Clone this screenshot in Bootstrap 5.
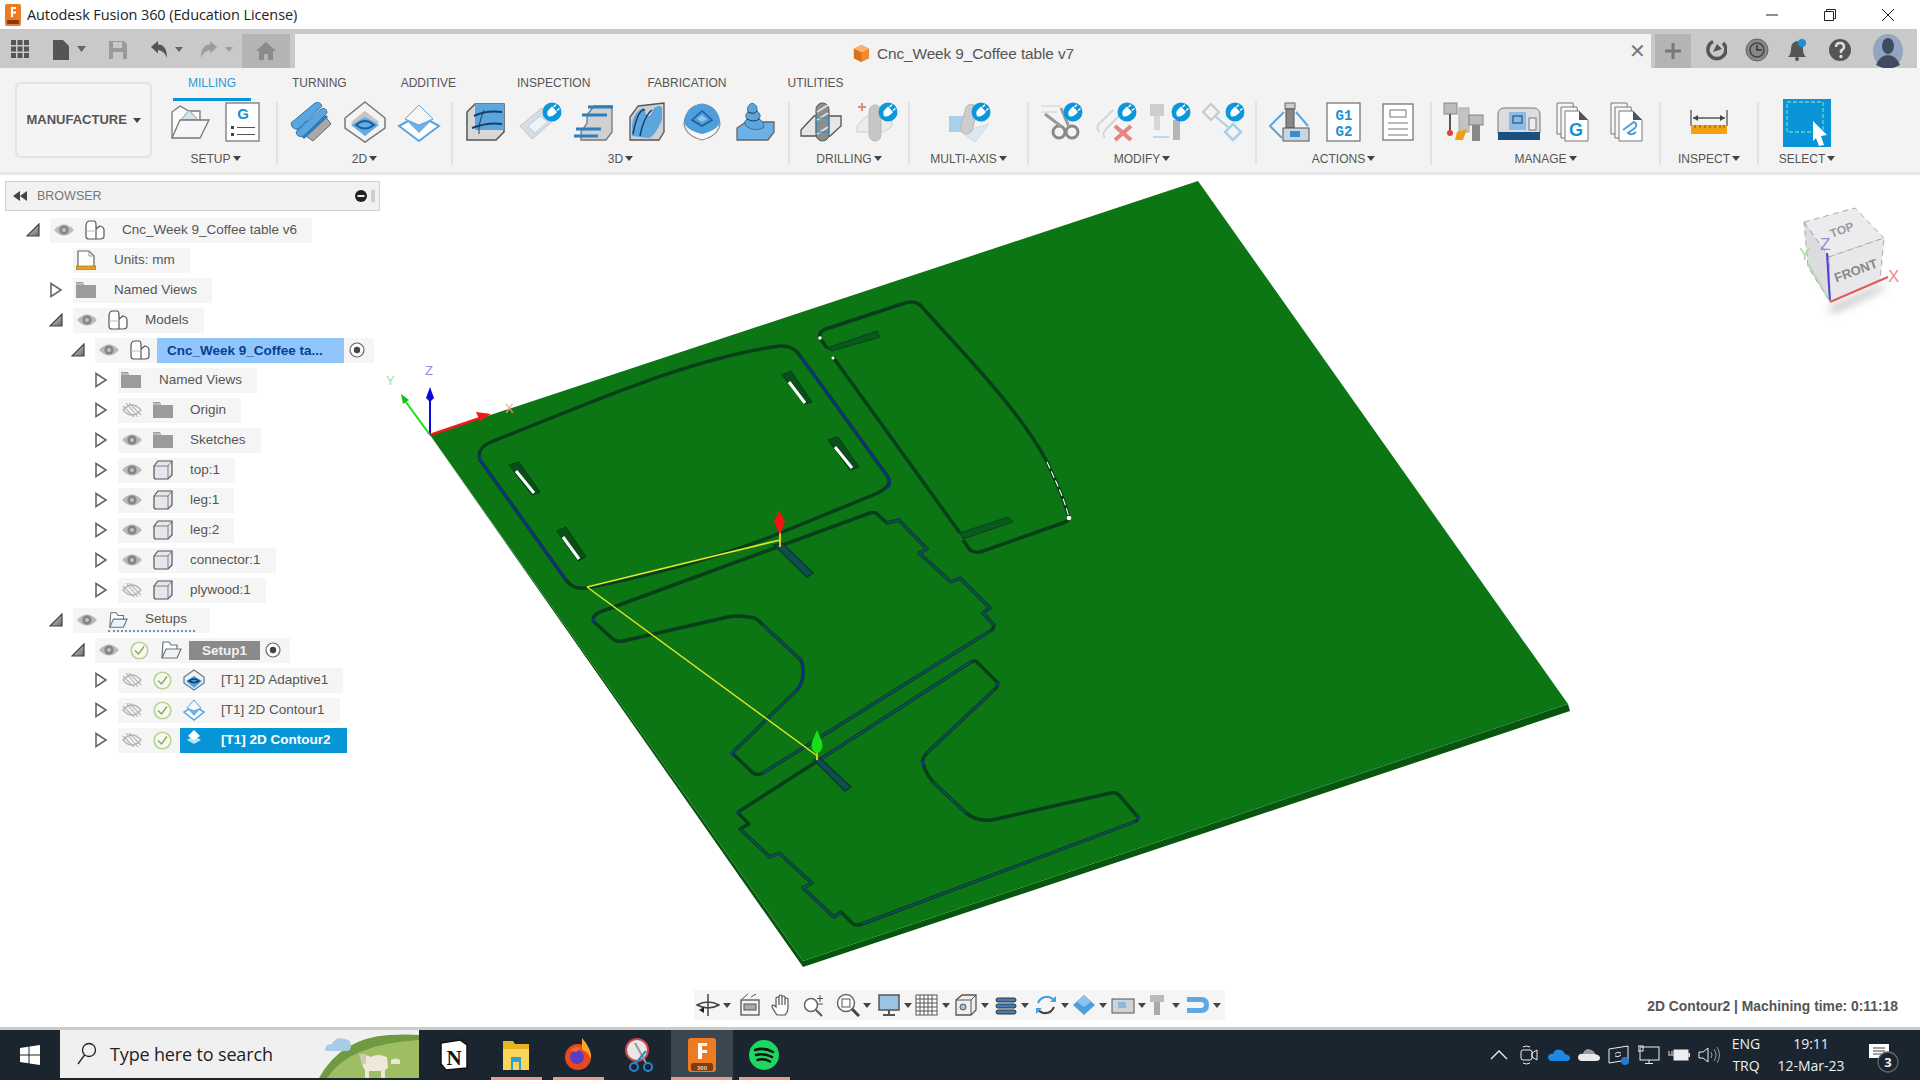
<!DOCTYPE html>
<html lang="en">
<head>
<meta charset="UTF-8">
<title>Autodesk Fusion 360 (Education License)</title>
<link href="https://cdn.jsdelivr.net/npm/bootstrap@5.3.2/dist/css/bootstrap.min.css" rel="stylesheet">
<style>
    html, body { height: 100%; overflow: hidden; background: #fff; font-family: "Liberation Sans", Arial, sans-serif; }
    .app-shell { height: 1080px; width: 1920px; }

    /* title bar */
    .title-bar { height: 29px; background: #fff; padding-left: 4px; }
    .title-text { font: 14.5px "Open Sans", sans-serif; color: #222; margin-left: 5px; letter-spacing: -.1px; }
    .win-btns { margin-left: auto; margin-right: 3px; }
    .win-btn { width: 58px; display: flex; justify-content: center; }

    /* tab bar */
    .tab-bar { height: 39px; background: #c9c9c9; padding-top: 5px; }
    .qat { width: 295px; height: 34px; position: relative; }
    .qat-slot { position: absolute; top: 6px; }
    .qs-grid { left: 11px; } .qs-file { left: 53px; } .qs-save { left: 108px; } .qs-undo { left: 150px; } .qs-redo { left: 200px; }
    .qat-home { position: absolute; left: 242px; top: 0; width: 48px; height: 34px; background: #b4b4b4; display: flex; align-items: center; justify-content: center; }
    .doc-tab { width: 1356px; height: 39px; margin-top: -5px; padding-top: 5px; padding-right: 20px; background: #f3f3f3; border-top: 5px solid #c9c9c9; position: relative; justify-content: center; }
    .doc-name { font-size: 15.4px; color: #555; margin-left: 6px; letter-spacing: -.1px; }
    .doc-close { position: absolute; right: 5px; top: 5px; font-size: 20px; color: #777; line-height: 24px; }
    .plus-btn { width: 36px; height: 34px; background: #b4b4b4; margin-left: 4px; }
    .tab-right { width: 226px; height: 34px; background: #c9c9c9; position: relative; }
    .tab-ico { position: absolute; top: 4px; }
    .ti-help1 { left: 14px; } .ti-clock { left: 54px; } .ti-bell { left: 95px; } .ti-help { left: 137px; } .ti-avatar { left: 182px; top: 0; }
    .edge-gap { background: #fff; width: 3px; height: 39px; margin-top: -5px; }

    /* ribbon */
    .ribbon { height: 107px; background: #f3f3f3; border-bottom: 3px solid #e6e6e6; padding-left: 15px; }
    .mfg-btn { width: 137px; height: 76px; margin-top: 14px; border: 2px solid #e2e2e2; border-radius: 6px; font-size: 13px; font-weight: 700; color: #555; background: #f4f4f4; white-space: nowrap; }
    .caret-mark { display: inline-block; width: 0; height: 0; border-left: 4px solid transparent; border-right: 4px solid transparent; border-top: 5px solid #444; vertical-align: 2px; margin-left: 2px; }
    .ribbon-main { margin-left: 11px; }
    .ribbon-tabs { height: 33px; padding-left: 10px; }
    .ribbon-tab { font-size: 12px; line-height: 30px; padding: 0 15px; color: #555; border-bottom: 3px solid transparent; }
    .ribbon-tab.on { color: #2a9ad8; border-bottom-color: #0696d7; }
    .ribbon-tab:nth-child(2) { margin-left: 26px; }
    .ribbon-tab:nth-child(3) { margin-left: 24px; }
    .ribbon-tab:nth-child(4) { margin-left: 31px; }
    .ribbon-tab:nth-child(5) { margin-left: 27px; }
    .ribbon-tab:nth-child(6) { margin-left: 31px; }
    .ribbon-grp { height: 63px; margin-top: 1px; border-right: 2px solid #e2e2e2; }
    .ribbon-icons { gap: 10px; height: 40px; }
    .rico { width: 44px; height: 40px; overflow: visible; }
    .ribbon-lbl { font-size: 12px; line-height: 16px; margin-top: 9px; color: #555; white-space: nowrap; position: relative; }
    .g-setup { width: 115px; padding-right: 8px; } .g-2d { width: 175px; } .g-3d { width: 337px; } .g-drill { width: 120px; }
    .g-multi { width: 119px; } .g-modify { width: 228px; } .g-actions { width: 175px; } .g-manage { width: 229px; }
    .g-inspect { width: 98px; } .g-select { width: 96px; border-right: 0; }

    /* viewport */
    .view-area { height: 852px; }
    .scene { position: absolute; left: 0; top: 0; width: 1920px; height: 852px; }

    /* browser */
    .browser-panel { position: relative; width: 380px; margin-left: 5px; padding-top: 6px; }
    .browser-head { height: 30px; width: 375px; background: #f1f1f1; border: 1px solid #cfcfcf; font-size: 12.5px; color: #777; padding-left: 7px; }
    .browser-head .bh-title { margin-left: 10px; }
    .tree-list { margin-left: -5px; margin-top: 4px; }
    .tree-row { height: 30px; white-space: nowrap; }
    .lv0 { padding-left: 26px; } .lv1 { padding-left: 49px; } .lv2 { padding-left: 71px; } .lv3 { padding-left: 94px; }
    .tw-slot { width: 24px; display: flex; align-items: center; flex: none; }
    .tree-pill { height: 25px; background: #f5f5f5; padding-left: 4px; padding-right: 15px; font-size: 13.5px; color: #555; }
    .tree-pill.p-tight { padding-right: 0; }
    .tree-pill.no-eye { padding-left: 3px; }
    .ti-eye { width: 20px; height: 14px; margin-right: 11px; flex: none; }
    .ti-check { width: 19px; height: 19px; margin-right: 11px; flex: none; }
    .ti-main { width: 20px; height: 20px; margin-right: 17px; flex: none; }
    .ti-op { width: 22px; height: 22px; margin-right: 16px; flex: none; }
    .ti-wide { margin-right: 7px; }
    .no-eye .ti-main { margin-right: 18px; }
    .active-doc { width: 187px; height: 25px; background: #90c6fb; color: #0b3d91; font-weight: 700; margin-left: -10px; padding-left: 10px; line-height: 25px; }
    .radio-mark { width: 16px; height: 16px; margin: 0 9px 0 5px; flex: none; }
    .setup-tag { width: 71px; height: 19px; background: #8a8a8a; color: #f2f2f2; font-weight: 700; text-align: center; line-height: 19px; }
    .dash-line { border-bottom: 2px dotted #6f93b8; height: 24px; padding-top: 1px; }
    .sel-op { width: 167px; height: 25px; background: #0696d7; color: #fff; font-weight: 700; margin-left: -3px; padding-left: 7px; }
    .sel-op svg { width: 14px; height: 14px; margin-right: 20px; margin-top: -6px; }

    /* bottom toolbar */
    .view-tools { position: absolute; left: 694px; top: 815px; height: 30px; width: 531px; background: #f5f5f5; padding-left: 2px; }
    .vt-item { display: flex; align-items: center; justify-content: flex-start; flex: none; }
    .vt-item svg { width: 24px; height: 24px; flex: none; }
    .vt-item .caret-mark { margin-left: 3px; border-top-color: #444; vertical-align: 0; }
    .vw-31 { width: 31px; } .vw-32 { width: 32px; } .vw-34 { width: 34px; } .vw-35 { width: 35px; } .vw-38 { width: 38px; }
    .vw-39 { width: 39px; } .vw-40 { width: 40px; } .vw-41 { width: 41px; } .vw-42 { width: 42px; }
    .status-text { position: absolute; right: 22px; top: 821px; font-size: 13.85px; font-weight: 700; color: #555; white-space: nowrap; }

    /* taskbar */
    .task-bar { height: 53px; background: #1b2530; border-top: 3px solid #cbcbc7; color: #eef0f2; font-family: "Open Sans", sans-serif; }
    .start-btn { width: 60px; }
    .search-box { width: 359px; height: 48px; background: #f0f0f0; position: relative; padding-left: 17px; color: #222; font-size: 18px; overflow: hidden; align-self: flex-start; }
    .search-box span { margin-left: 13px; letter-spacing: -.15px; position: relative; }
    .search-art { position: absolute; right: 0; top: 0; width: 100px; height: 48px; }
    .task-apps { padding-left: 4px; }
    .task-app { width: 62px; height: 50px; position: relative; display: flex; align-items: center; justify-content: center; }
    .task-app svg { width: 32px; height: 36px; }
    .task-app.open::after { content: ""; position: absolute; left: 6px; right: 5px; bottom: 0; height: 3px; background: #e89c88; }
    .task-app.front { background: #3b4651; }
    .task-app.front::after { left: 0; right: 1px; }
    .tray { margin-left: auto; padding-right: 16px; }
    .tray-ico { width: 30px; display: flex; justify-content: center; }
    .tray-ico svg { width: 22px; height: 20px; }
    .lang-box { width: 44px; text-align: center; font-size: 14px; line-height: 22px; }
    .clock-box { width: 86px; text-align: center; font-size: 14px; line-height: 22px; white-space: nowrap; }
    .notify-box { width: 50px; height: 50px; position: relative; }
    .notify-box svg { position: absolute; left: 15px; top: 12px; width: 34px; height: 34px; }
</style>
</head>
<body>

<!-- shared icons -->
<svg width="0" height="0" class="position-absolute">
  <defs>
    <symbol id="eye" viewBox="0 0 20 14"><path d="M0 7Q10-4 20 7Q10 18 0 7Z" fill="#b9b9b9"/><circle cx="10" cy="7" r="4.600" fill="#858585"/><circle cx="10" cy="7" r="2" fill="#c2c2c2"/></symbol>
    <symbol id="eye-off" viewBox="0 0 20 14"><path d="M1 7Q10-3 19 7Q10 17 1 7Z" fill="none" stroke="#b4b4b4" stroke-width="1.300"/><path d="M4 0L16 14M7 0L19 12M1 3L12 14" stroke="#b4b4b4" stroke-width="1.100"/></symbol>
    <symbol id="comp" viewBox="0 0 20 20"><path d="M1 6Q1 1 5 1H9Q11 1 11 5V19H4Q1 19 1 16ZM11 9L15 6Q19 7 19 10V16Q19 19 15 19H11" fill="#fff" stroke="#555" stroke-width="1.200"/><path d="M1 11H11" stroke="#bbb"/></symbol>
    <symbol id="folder" viewBox="0 0 20 20"><path d="M0 2H7L8 5H20V18H0Z" fill="#9b9b9b"/><path d="M0 4H7" stroke="#ddd"/></symbol>
    <symbol id="body" viewBox="0 0 20 20"><path d="M1 6L5 1H19V15L15 19H3Q1 19 1 17Z" fill="#e6e7ee" stroke="#555" stroke-width="1.200"/><path d="M1 6H15V19M15 6L19 1" fill="none" stroke="#666" stroke-width=".8"/></symbol>
    <symbol id="units" viewBox="0 0 20 20"><path d="M2 16V1H13L18 6V16" fill="#fff" stroke="#666" stroke-width="1.200"/><path d="M13 1V6H18" fill="none" stroke="#999"/><rect x="0" y="16" width="20" height="4" fill="#e9a11d" stroke="#8a6a18" stroke-width=".6"/></symbol>
    <symbol id="setup-ico" viewBox="0 0 22 22"><path d="M2 19L3 3H9L11 6H17V10" fill="#fff" stroke="#6a7480" stroke-width="1.200"/><path d="M2 19L6 10H21L17 19Z" fill="#eef3f7" stroke="#6a7480" stroke-width="1.200"/></symbol>
    <symbol id="check" viewBox="0 0 19 19"><circle cx="9.500" cy="9.500" r="8.300" fill="#f7faf0" stroke="#b6d48f" stroke-width="1.600"/><path d="M5 9.500L8.500 13L14 5.500" fill="none" stroke="#7fa85a" stroke-width="1.300"/></symbol>
    <symbol id="radio" viewBox="0 0 16 16"><circle cx="8" cy="8" r="7" fill="#fff" stroke="#666" stroke-width="1.200"/><circle cx="8" cy="8" r="3.200" fill="#444"/></symbol>
    <symbol id="tri-down" viewBox="0 0 14 14"><defs><linearGradient id="trifill" x1="0" y1="0" x2="1" y2="1"><stop offset="0" stop-color="#e4e4e4"/><stop offset="1" stop-color="#666"/></linearGradient></defs><path d="M1 13L13 1V13Z" fill="url(#trifill)" stroke="#444" stroke-width="1.200"/></symbol>
    <symbol id="tri-right" viewBox="0 0 14 16"><path d="M2 1.500L12 8L2 14.500Z" fill="#fff" stroke="#666" stroke-width="1.600"/></symbol>
    <symbol id="plug" viewBox="0 0 20 20"><circle cx="10" cy="10" r="9.500" fill="#0c97dc"/><path d="M6 14Q4 10 7.500 7L10 4.500L15 10L12.500 12.500Q9 15.500 6 14Z" fill="#fff"/><path d="M11.500 5L14 2.800M15 8.500L17.500 6.500" stroke="#fff" stroke-width="1.500"/></symbol>
  </defs>
</svg>

<div class="app-shell d-flex flex-column">

  <!-- title bar -->
  <div class="title-bar d-flex align-items-center">
    <svg width="18" height="24" viewBox="0 0 18 24"><rect x="1" y="1" width="16" height="22" rx="2" fill="#ee7b22"/><path d="M7 4H12V6H9V8.500H12V10.500H9V14H7Z" fill="#fff"/><rect x="3" y="17" width="12" height="4" rx="1" fill="#7d3d10"/></svg>
    <span class="title-text">Autodesk Fusion 360 (Education License)</span>
    <div class="win-btns d-flex align-items-center">
      <span class="win-btn"><svg width="14" height="14" viewBox="0 0 14 14"><path d="M1 7H13" stroke="#222"/></svg></span>
      <span class="win-btn"><svg width="14" height="14" viewBox="0 0 14 14"><path d="M1.500 3.500H10.500V12.500H1.500ZM3.500 3.500V1.500H12.500V10.500H10.500" fill="none" stroke="#222"/></svg></span>
      <span class="win-btn"><svg width="14" height="14" viewBox="0 0 14 14"><path d="M1 1L13 13M13 1L1 13" stroke="#222"/></svg></span>
    </div>
  </div>

  <!-- application tab bar -->
  <div class="tab-bar d-flex">
    <div class="qat">
      <svg class="qat-slot qs-grid" width="18" height="18" viewBox="0 0 18 18" fill="#555"><rect width="5" height="5"/><rect x="6.500" width="5" height="5"/><rect x="13" width="5" height="5"/><rect y="6.500" width="5" height="5"/><rect x="6.500" y="6.500" width="5" height="5"/><rect x="13" y="6.500" width="5" height="5"/><rect y="13" width="5" height="5"/><rect x="6.500" y="13" width="5" height="5"/><rect x="13" y="13" width="5" height="5"/></svg>
      <svg class="qat-slot qs-file" width="34" height="20" viewBox="0 0 34 20"><path d="M0 0H10L16 6V20H0Z" fill="#555"/><path d="M24 6H33L28.500 12Z" fill="#666"/></svg>
      <svg class="qat-slot qs-save" width="20" height="20" viewBox="0 0 20 20"><path d="M1 1H16L19 4V19H1Z" fill="#9a9a9a"/><rect x="5" y="2" width="9" height="6" fill="#c9c9c9"/><rect x="5" y="12" width="10" height="7" fill="#c9c9c9"/></svg>
      <svg class="qat-slot qs-undo" width="36" height="20" viewBox="0 0 36 20"><path d="M1 7L8 1V4.500Q17 4.500 17 18Q14 10.500 8 10V13.500Z" fill="#555"/><path d="M25 7H33L29 12Z" fill="#666"/></svg>
      <svg class="qat-slot qs-redo" width="36" height="20" viewBox="0 0 36 20"><path d="M17 7L10 1V4.500Q1 4.500 1 18Q4 10.500 10 10V13.500Z" fill="#9c9c9c"/><path d="M25 7H33L29 12Z" fill="#9c9c9c"/></svg>
      <div class="qat-home"><svg width="20" height="18" viewBox="0 0 20 18"><path d="M10 0L20 9H17V18H12V12H8V18H3V9H0Z" fill="#8a8a8a"/></svg></div>
    </div>
    <div class="doc-tab d-flex align-items-center">
      <svg width="19" height="19" viewBox="0 0 20 20"><path d="M10 1L18 5V15L10 19L2 15V5Z" fill="#ee8a2c"/><path d="M2 5L10 9L18 5L10 1Z" fill="#f8b26a"/><path d="M10 9V19L2 15V5Z" fill="#d9701c"/></svg>
      <span class="doc-name">Cnc_Week 9_Coffee table v7</span>
      <span class="doc-close">&#10005;</span>
    </div>
    <div class="plus-btn d-flex align-items-center justify-content-center"><svg width="20" height="20" viewBox="0 0 20 20"><path d="M10 2V18M2 10H18" stroke="#777" stroke-width="3"/></svg></div>
    <div class="tab-right">
      <svg class="tab-ico ti-help1" width="22" height="24" viewBox="0 0 22 24"><path d="M8 3.500A9 9 0 1 0 18 5" fill="none" stroke="#555" stroke-width="3.500"/><path d="M8 14L12 6L17 11Z" fill="#555"/></svg>
      <svg class="tab-ico ti-clock" width="24" height="24" viewBox="0 0 24 24"><circle cx="12" cy="12" r="11" fill="#888" stroke="#666"/><circle cx="12" cy="12" r="7" fill="none" stroke="#444" stroke-width="1.500"/><path d="M12 7V12H17" fill="none" stroke="#333" stroke-width="1.500"/></svg>
      <svg class="tab-ico ti-bell" width="24" height="24" viewBox="0 0 24 24"><path d="M2 19Q5 16 5 11Q5 4 11 3Q17 4 17 11Q17 16 20 19Z" fill="#555"/><circle cx="11" cy="21" r="2" fill="#555"/><circle cx="16" cy="5" r="4" fill="#1a8fd8"/></svg>
      <svg class="tab-ico ti-help" width="24" height="24" viewBox="0 0 24 24"><circle cx="12" cy="12" r="11" fill="#555"/><path d="M8 9Q8 5 12 5Q16 5 16 9Q16 11 13 12.500V15" fill="none" stroke="#ddd" stroke-width="2.500"/><circle cx="13" cy="18.500" r="1.700" fill="#ddd"/></svg>
      <svg class="tab-ico ti-avatar" width="30" height="34" viewBox="0 0 30 34"><ellipse cx="15" cy="17" rx="15" ry="17" fill="#93a6c0"/><ellipse cx="15" cy="12" rx="6" ry="8" fill="#3f4b5f"/><path d="M3 31Q7 21 15 21Q23 21 27 31Q15 38 3 31Z" fill="#3f4b5f"/></svg>
    </div>
    <div class="edge-gap"></div>
  </div>

  <!-- ribbon -->
  <div class="ribbon d-flex">
    <div class="mfg-btn d-flex align-items-center justify-content-center">MANUFACTURE&nbsp;<span class="caret-mark"></span></div>
    <div class="ribbon-main d-flex flex-column">
      <div class="ribbon-tabs d-flex">
        <span class="ribbon-tab on">MILLING</span>
        <span class="ribbon-tab">TURNING</span>
        <span class="ribbon-tab">ADDITIVE</span>
        <span class="ribbon-tab">INSPECTION</span>
        <span class="ribbon-tab">FABRICATION</span>
        <span class="ribbon-tab">UTILITIES</span>
      </div>
      <div class="d-flex">

        <div class="ribbon-grp g-setup d-flex flex-column align-items-center">
          <div class="ribbon-icons d-flex">
            <svg class="rico" viewBox="0 0 44 40"><path d="M5 36V10L13 4L22 9H33V18" fill="#fafafa" stroke="#777" stroke-width="1.300"/><path d="M14 18L22 8L31 18Z" fill="#d5e3ea" stroke="#999"/><path d="M5 36H33L42 18H13Z" fill="#f6f6f6" fill-opacity=".85" stroke="#777" stroke-width="1.300"/></svg>
            <svg class="rico" viewBox="0 0 44 40"><rect x="5" y="1" width="33" height="38" fill="#fff" stroke="#777" stroke-width="1.300"/><text x="22" y="17" text-anchor="middle" font-size="15" font-weight="700" fill="#1b8fd0" font-family="Liberation Sans">G</text><rect x="10" y="24" width="3" height="3" fill="#444"/><rect x="10" y="31" width="3" height="3" fill="#444"/><path d="M16 25.500H34M16 32.500H34" stroke="#555"/></svg>
          </div>
          <div class="ribbon-lbl">SETUP<span class="caret-mark"></span></div>
        </div>

        <div class="ribbon-grp g-2d d-flex flex-column align-items-center">
          <div class="ribbon-icons d-flex">
            <svg class="rico" viewBox="0 0 44 40"><path d="M3 24L24 39L42 22L36 14Z" fill="#a9a9a9" stroke="#666"/><path d="M2 21L26 1Q31-1 33 4L9 27Q3 28 2 21Z" fill="#5aa5de" stroke="#2f79b5"/><path d="M7 30L32 7Q38 5 38 11L15 34Q8 36 7 30Z" fill="#5aa5de" stroke="#2f79b5"/><path d="M14 36L38 14" stroke="#2f79b5" stroke-width="3"/></svg>
            <svg class="rico" viewBox="0 0 44 40"><path d="M22 0L42 16V26L22 40L2 26V16Z" fill="#f3f3f3" stroke="#777" stroke-width="1.500"/><path d="M22 9L36 20L22 34L8 20Z" fill="#c5c5c5"/><path d="M22 15L36 23L22 34L8 23Z" fill="#64ace2"/><path d="M13 23Q22 15 31 23Q22 30 13 23Z" fill="none" stroke="#1c5f9c" stroke-width="2"/></svg>
            <svg class="rico" viewBox="0 0 44 40"><path d="M22 13L42 24L22 39L2 24Z" fill="#fff" stroke="#5aa5de" stroke-width="2"/><path d="M22 3L36 17L22 31L8 17Z" fill="#6fb0e6"/><path d="M22 3L36 17L22 23L8 17Z" fill="#f7f7f7" stroke="#5aa5de"/></svg>
          </div>
          <div class="ribbon-lbl">2D<span class="caret-mark"></span></div>
        </div>

        <div class="ribbon-grp g-3d d-flex flex-column align-items-center">
          <div class="ribbon-icons d-flex">
            <svg class="rico" viewBox="0 0 44 40"><path d="M11 2H40V30L32 38H3V10Z" fill="#d8d8d8" stroke="#555" stroke-width="1.500"/><path d="M11 2H40V28H11Z" fill="#5ca6e0"/><path d="M10 14Q22 8 38 10M8 26Q24 20 38 22" stroke="#1a3d66" stroke-width="2" fill="none"/><path d="M20 8Q14 22 15 32" stroke="#1a3d66" fill="none"/></svg>
            <svg class="rico" viewBox="0 0 44 40"><path d="M2 24L24 6L36 18L14 37Z" fill="#d7dde2" stroke="#c4c4c4"/><path d="M10 24L22 14L30 20L17 31Z" fill="#eef3f7" stroke="#bcd"/><use href="#plug" x="24" y="0" width="20" height="20"/></svg>
            <svg class="rico" viewBox="0 0 44 40"><path d="M9 38V30L15 21V13L22 4H40V30L34 38Z" fill="#d0d0d0" stroke="#777" stroke-width="1.300"/><path d="M16 5H41M10 13H35M4 27H29M2 34H26" stroke="#2c7fbd" stroke-width="3"/></svg>
            <svg class="rico" viewBox="0 0 44 40"><path d="M12 4L38 1V30L33 38H4V15Z" fill="#cfcfcf" stroke="#555" stroke-width="1.300"/><path d="M6 34Q4 10 18 6Q22 22 28 6Q34 2 36 6V18Q28 36 22 36Z" fill="#5ca6e0"/><path d="M7 32Q12 6 19 8M14 34Q18 14 26 8" stroke="#1a3d66" fill="none" stroke-width="1.500"/></svg>
            <svg class="rico" viewBox="0 0 44 40"><path d="M4 22Q6 4 22 2Q38 4 40 22Q38 34 22 38Q6 34 4 22Z" fill="#f8f8f8" stroke="#888" stroke-width="1.200"/><path d="M4 20Q6 4 22 2Q38 4 40 20Q38 28 22 32Q6 28 4 20Z" fill="#4e9edc"/><path d="M12 18L22 9L32 18L22 24Z" fill="none" stroke="#1c5f9c" stroke-width="1.600"/><path d="M17 17L22 13L27 17L22 20Z" fill="#8fc4ec"/></svg>
            <svg class="rico" viewBox="0 0 44 40"><path d="M3 38V26L12 20H40V30L34 38Z" fill="#6cb0e6" stroke="#666" stroke-width="1.300"/><path d="M12 24Q9 20 13 17Q10 13 14 10Q12 4 18 1Q24 3 23 9Q28 13 25 17Q32 21 29 26Q20 30 12 24Z" fill="#5ca6e0" stroke="#3a6f9b"/><path d="M13 17Q20 21 25 17M14 10Q20 13 23 9" stroke="#333" fill="none"/></svg>
          </div>
          <div class="ribbon-lbl">3D<span class="caret-mark"></span></div>
        </div>

        <div class="ribbon-grp g-drill d-flex flex-column align-items-center">
          <div class="ribbon-icons d-flex">
            <svg class="rico" viewBox="0 0 44 40"><path d="M1 28L14 14H41V24L30 34H1Z" fill="#e6e6e6" stroke="#555" stroke-width="1.300"/><rect x="16" y="1" width="13" height="38" rx="6.500" fill="#8d8d8d" stroke="#555"/><path d="M17 10L28 3M17 18L28 11M17 32L28 25" stroke="#ddd" stroke-width="2"/><rect x="16" y="16" width="13" height="14" fill="none" stroke="#1b8fd0"/></svg>
            <svg class="rico" viewBox="0 0 44 40"><path d="M4 5H12M8 1V9" stroke="#e58a7a" stroke-width="2"/><path d="M3 24L13 14H38V24L30 30H3Z" fill="#ececec" stroke="#cfcfcf"/><rect x="15" y="3" width="12" height="36" rx="6" fill="#c6c6c6" stroke="#bbb"/><use href="#plug" x="24" y="0" width="20" height="20"/></svg>
          </div>
          <div class="ribbon-lbl">DRILLING<span class="caret-mark"></span></div>
        </div>

        <div class="ribbon-grp g-multi d-flex flex-column align-items-center">
          <div class="ribbon-icons d-flex">
            <svg class="rico" viewBox="0 0 44 40"><path d="M14 30L42 22L28 40Z" fill="#dce7ef" stroke="#cfdbe4"/><rect x="2" y="14" width="16" height="16" fill="#a9cfea"/><rect x="16" y="2" width="12" height="30" rx="6" transform="rotate(15 22 17)" fill="#cdcdcd" stroke="#bbb"/><use href="#plug" x="24" y="0" width="20" height="20"/></svg>
          </div>
          <div class="ribbon-lbl">MULTI-AXIS<span class="caret-mark"></span></div>
        </div>

        <div class="ribbon-grp g-modify d-flex flex-column align-items-center">
          <div class="ribbon-icons d-flex">
            <svg class="rico" viewBox="0 0 44 40"><path d="M2 4H22M2 10H18" stroke="#cfcfcf"/><circle cx="20" cy="30" r="6" fill="none" stroke="#888" stroke-width="3"/><circle cx="33" cy="30" r="6" fill="none" stroke="#888" stroke-width="3"/><path d="M23 25L6 12M30 25L22 6" stroke="#999" stroke-width="3"/><use href="#plug" x="24" y="0" width="20" height="20"/></svg>
            <svg class="rico" viewBox="0 0 44 40"><path d="M6 30Q2 24 8 20L20 8M12 36Q8 32 14 26L26 14" fill="none" stroke="#cfd6dc" stroke-width="2"/><path d="M22 24L38 38M38 24L22 38" stroke="#e58484" stroke-width="4"/><use href="#plug" x="24" y="0" width="20" height="20"/></svg>
            <svg class="rico" viewBox="0 0 44 40"><rect x="3" y="2" width="14" height="12" fill="#cdcdcd"/><rect x="7" y="14" width="6" height="14" fill="#d6d6d6"/><rect x="26" y="18" width="7" height="20" fill="#b5b5b5"/><path d="M6 35H22" stroke="#a9cfea" stroke-width="1.500"/><use href="#plug" x="24" y="0" width="20" height="20"/></svg>
            <svg class="rico" viewBox="0 0 44 40"><path d="M10 2L18 10L10 18L2 10Z" fill="none" stroke="#c7c7c7" stroke-width="2"/><path d="M32 22L40 30L32 38L24 30Z" fill="none" stroke="#a9cfea" stroke-width="2.500"/><path d="M14 14L28 26" stroke="#a9cfea" stroke-width="2"/><use href="#plug" x="24" y="0" width="20" height="20"/></svg>
          </div>
          <div class="ribbon-lbl">MODIFY<span class="caret-mark"></span></div>
        </div>

        <div class="ribbon-grp g-actions d-flex flex-column align-items-center">
          <div class="ribbon-icons d-flex">
            <svg class="rico" viewBox="0 0 44 40"><path d="M16 10L2 24L14 36" fill="none" stroke="#5aa5de" stroke-width="2"/><path d="M28 10L40 24" fill="none" stroke="#5aa5de" stroke-width="2"/><rect x="17" y="1" width="10" height="6" fill="#ccc" stroke="#666"/><rect x="18" y="7" width="8" height="19" fill="#888" stroke="#555"/><rect x="15" y="26" width="26" height="13" fill="#c9d5df" stroke="#555"/><rect x="22" y="29" width="10" height="6" fill="#3f8ecb"/></svg>
            <svg class="rico" viewBox="0 0 44 40"><rect x="5" y="1" width="33" height="38" fill="#fff" stroke="#777" stroke-width="1.300"/><text x="22" y="18" text-anchor="middle" font-size="14" font-weight="700" fill="#1b8fd0" font-family="Liberation Mono">G1</text><text x="22" y="34" text-anchor="middle" font-size="14" font-weight="700" fill="#1b8fd0" font-family="Liberation Mono">G2</text></svg>
            <svg class="rico" viewBox="0 0 44 40"><rect x="7" y="2" width="30" height="36" fill="#fff" stroke="#777" stroke-width="1.300"/><rect x="14" y="8" width="16" height="7" fill="none" stroke="#777"/><path d="M12 21H32M12 27H32M12 33H32" stroke="#777"/></svg>
          </div>
          <div class="ribbon-lbl">ACTIONS<span class="caret-mark"></span></div>
        </div>

        <div class="ribbon-grp g-manage d-flex flex-column align-items-center">
          <div class="ribbon-icons d-flex">
            <svg class="rico" viewBox="0 0 44 40"><rect x="1" y="1" width="13" height="11" fill="#bbb" stroke="#888"/><path d="M7 12V28" stroke="#555" stroke-width="2"/><circle cx="7" cy="31" r="3" fill="#e23b3b"/><rect x="16" y="6" width="10" height="24" fill="#c3c3c3" stroke="#aaa"/><path d="M14 30L24 27L20 38L12 38Z" fill="#ef9f16"/><rect x="26" y="13" width="14" height="10" fill="#bbb" stroke="#888"/><rect x="29" y="23" width="8" height="16" fill="#888"/></svg>
            <svg class="rico" viewBox="0 0 44 40"><rect x="1" y="6" width="42" height="30" rx="6" fill="#d9dde0" stroke="#777"/><rect x="1" y="30" width="42" height="8" fill="#1a4f80"/><rect x="12" y="10" width="17" height="18" fill="#87bde6"/><rect x="16" y="14" width="9" height="7" fill="none" stroke="#336"/><rect x="32" y="16" width="7" height="12" fill="#eee" stroke="#777"/></svg>
            <svg class="rico" viewBox="0 0 44 40"><path d="M6 1H22L24 32H6Z" fill="#f7f7f7" stroke="#777"/><path d="M10 5H26L30 36H10Z" fill="#f7f7f7" stroke="#777"/><path d="M14 9H28L37 18V39H14Z" fill="#fff" stroke="#777"/><path d="M28 9L37 18H28Z" fill="#555"/><text x="25" y="34" text-anchor="middle" font-size="18" font-weight="700" fill="#1b8fd0" font-family="Liberation Sans">G</text></svg>
            <svg class="rico" viewBox="0 0 44 40"><path d="M6 1H22L24 32H6Z" fill="#f7f7f7" stroke="#777"/><path d="M10 5H26L30 36H10Z" fill="#f7f7f7" stroke="#777"/><path d="M14 9H28L37 18V39H14Z" fill="#fff" stroke="#777"/><path d="M28 9L37 18H28Z" fill="#555"/><path d="M18 28L29 20Q33 22 30 26L23 31Q26 34 31 30" fill="none" stroke="#4e9edc" stroke-width="2"/></svg>
          </div>
          <div class="ribbon-lbl">MANAGE<span class="caret-mark"></span></div>
        </div>

        <div class="ribbon-grp g-inspect d-flex flex-column align-items-center">
          <div class="ribbon-icons d-flex">
            <svg class="rico" viewBox="0 0 44 40"><path d="M4 8V24M40 8V24M6 16H38" stroke="#555" stroke-width="1.300"/><path d="M6 16L11 13V19ZM38 16L33 13V19Z" fill="#444"/><rect x="4" y="23" width="36" height="9" fill="#f2a30f"/><path d="M8 23V26M13 23V26M18 23V26M23 23V26M28 23V26M33 23V26M37 23V26" stroke="#7a5a10"/></svg>
          </div>
          <div class="ribbon-lbl">INSPECT<span class="caret-mark"></span></div>
        </div>

        <div class="ribbon-grp g-select d-flex flex-column align-items-center">
          <div class="ribbon-icons d-flex">
            <svg class="rico" viewBox="0 0 44 40"><rect x="-2" y="-3" width="48" height="48" fill="#0a94d8"/><rect x="2" y="0" width="36" height="30" fill="none" stroke="#67d3c2" stroke-width="1.300" stroke-dasharray="4 2"/><path d="M28 19L42 33L36 34L39 43L34 44L31 36L28 39Z" fill="#fff"/></svg>
          </div>
          <div class="ribbon-lbl">SELECT<span class="caret-mark"></span></div>
        </div>
      </div>
    </div>
  </div>

  <!-- viewport -->
  <div class="view-area position-relative">
    <svg class="scene" viewBox="0 175 1920 852">
      <!-- board -->
      <path d="M430 435L803 967L1570 711L1568 704L803 961Z" fill="#07560f"/>
      <path d="M430 435L1198 181L1568 704L803 961Z" fill="#0c7514"/>

      <!-- cut paths -->
      <g fill="none" stroke="#073f1a" stroke-width="3.500" stroke-linejoin="round">
        <path d="M480 460C477 451 482 446 491 442C590 403 690 358 780 346Q794 345 801 357L888 477Q893 485 878 493L780 533C720 558 650 575 587 588Q573 590 566 580Z"/>
        <path d="M594 622Q591 616 600 612L870 513Q874 512 876 513L887 523L899 520L927 549L919 553L951 582L960 578L990 608L983 613L994 625Q994 629 990 631L763 773Q757 776 753 773L732 753L797 690Q807 677 801 660L763 625Q756 616 747 617Q738 615 728 617L623 641Q618 642 614 640Z"/>
        <path d="M738 812L816 762L971 662Q975 660 977 662L998 683Q998 687 994 690L927 753Q921 760 923 763Q925 772 933 782L966 813Q978 822 992 820L1111 793Q1116 792 1119 795L1138 817Q1139 820 1134 822L862 924Q857 926 853 924L841 912L834 917L803 888L812 883L779 853L770 857L740 829L749 824L738 813Z"/>
        <path d="M827 348L820 338Q818 332 826 329L905 303Q916 300 922 307C960 350 1020 410 1047 462C1056 482 1065 500 1069 518Q1069 521 1063 523L983 551Q974 554 970 550L963 540M833 357L960 533"/>
      </g>
      <g fill="none" stroke="#0f2f8e" stroke-width="2.200">
        <path d="M480 460L566 580M801 357L888 477Q893 485 886 488M801 660Q807 677 797 690"/>
      </g>
      <g fill="none" stroke="#134d6d" stroke-width="1.500">
        <path d="M887 523L899 520L927 549L919 553L951 582L960 578L990 608L983 613L994 625M990 631L763 773M763 625L801 660M797 690L732 753M971 662L816 762M994 690L927 753M933 782L966 813M1134 822L862 924M841 912L834 917L803 888L812 883L779 853L770 857L740 829"/>
      </g>
      <g fill="#1030d8"><circle cx="480" cy="458" r="1.800"/><circle cx="594" cy="620" r="1.800"/><circle cx="923" cy="763" r="1.800"/><circle cx="998" cy="684" r="1.500"/><circle cx="1138" cy="818" r="1.500"/><circle cx="738" cy="812" r="1.500"/><circle cx="732" cy="753" r="1.500"/></g>
      <path d="M1047 462C1056 482 1065 500 1069 518" fill="none" stroke="#fff" stroke-width="1.100" stroke-dasharray="7 3"/>
      <circle cx="1069" cy="518" r="2.300" fill="#fff"/><circle cx="820" cy="338" r="1.800" fill="#fff"/><circle cx="833" cy="358" r="1.500" fill="#fff"/>

      <!-- leg slots -->
      <path d="M827 348L877 331L880 337L832 351Z" fill="#0a5a1c" stroke="#07401a"/>
      <path d="M960 533L1008 517L1013 522L963 539Z" fill="#0a5a1c" stroke="#07401a"/>
      <g fill="#0a4f1a" stroke="#063b14">
        <path d="M782 375L791 371L812 402L805 404Z"/><path d="M828 440L838 437L859 467L850 470Z"/>
        <path d="M509 465L519 462L540 492L532 495Z"/><path d="M557 531L566 527L586 557L578 561Z"/>
      </g>
      <g stroke="#fff" stroke-width="3">
        <path d="M789 382L805 403M835 447L852 468M516 471L534 493M563 537L579 559"/>
      </g>
      <path d="M774 545L782 543L813 573L807 577Z" fill="#0f4f52" stroke="#083c2a" stroke-width="1.500"/>
      <path d="M814 760L820 758L851 787L845 791Z" fill="#0f4f52" stroke="#083c2a" stroke-width="1.500"/>

      <!-- toolpath links -->
      <g fill="none" stroke="#e4e62a" stroke-width="1.500">
        <path d="M587 587L780 540M587 587L816 755"/>
        <path d="M780 530V547M817 748V760" stroke="#f3d21e" stroke-width="1.800"/>
      </g>
      <path d="M779 511L785 521Q783 528 780 534Q776 528 774 521Z" fill="#f01414"/>
      <path d="M817 730L822 742Q824 750 817 754Q810 750 812 742Z" fill="#18e018"/>

      <!-- origin axes -->
      <path d="M430 435V392" stroke="#0b0bd8" stroke-width="2"/>
      <path d="M430 387L434 398L430 402L426 398Z" fill="#0b0bd8"/>
      <path d="M430 435L403 398" stroke="#14e014" stroke-width="2"/>
      <path d="M401 394L409 400L403 404Z" fill="#14c014"/>
      <path d="M430 435L486 416" stroke="#f01818" stroke-width="2.500"/>
      <path d="M476 412L491 414L480 421Z" fill="#f01818"/>
      <g font-family="Liberation Sans" font-size="13">
        <text x="386" y="385" fill="#8fe6a0">Y</text>
        <text x="425" y="375" fill="#8f8fe0">Z</text>
        <text x="505" y="413" fill="#f0a0a0">X</text>
      </g>

      <!-- view cube -->
      <defs><filter id="cubeshadow" x="-30%" y="-30%" width="160%" height="160%"><feGaussianBlur stdDeviation="5"/></filter></defs>
      <path d="M1810 270L1830 308L1885 284L1880 290L1832 312Z" fill="#999" filter="url(#cubeshadow)"/>
      <path d="M1804 222L1855 208L1884 238L1829 257Z" fill="#ececee" stroke="#aaa" stroke-dasharray="6 4"/>
      <path d="M1829 257L1884 238L1880 280L1830 302Z" fill="#e8e8ea" stroke="#aaa" stroke-dasharray="6 4"/>
      <path d="M1804 222L1829 257L1830 302L1808 267Z" fill="#dcdcde" stroke="#aaa" stroke-dasharray="6 4"/>
      <text x="1842" y="234" text-anchor="middle" font-size="12" font-weight="700" fill="#999" font-family="Liberation Sans" transform="rotate(-20 1842 230)">TOP</text>
      <text x="1856" y="275" text-anchor="middle" font-size="13" font-weight="700" fill="#888" font-family="Liberation Sans" transform="rotate(-20 1856 271)">FRONT</text>
      <path d="M1827 253L1830 302" stroke="#4a3fd8" stroke-width="2"/>
      <path d="M1830 302L1888 277" stroke="#e05a5a" stroke-width="2"/>
      <path d="M1808 263L1830 302" stroke="#a7dca7" stroke-width="1.500"/>
      <g font-family="Liberation Sans" font-size="17">
        <text x="1820" y="250" fill="#8f8fe8">Z</text>
        <text x="1799" y="260" fill="#a6e0a6">Y</text>
        <text x="1888" y="282" fill="#ee8a8a">X</text>
      </g>
    </svg>

    <!-- browser panel -->
    <div class="browser-panel">
      <div class="browser-head d-flex align-items-center">
        <svg width="14" height="10" viewBox="0 0 14 10"><path d="M7 0V10L0 5ZM14 0V10L7 5Z" fill="#444"/></svg>
        <span class="bh-title">BROWSER</span>
        <svg class="ms-auto" width="12" height="12" viewBox="0 0 12 12"><circle cx="6" cy="6" r="6" fill="#222"/><rect x="2.500" y="5" width="7" height="2" fill="#eee"/></svg>
        <svg class="mx-1" width="4" height="14" viewBox="0 0 4 14"><path d="M1 1V13M3 1V13" stroke="#aaa"/></svg>
      </div>
      <div class="tree-list">

        <div class="tree-row lv0 d-flex align-items-center">
          <span class="tw-slot"><svg width="14" height="14"><use href="#tri-down"/></svg></span>
          <div class="tree-pill d-flex align-items-center"><svg class="ti-eye"><use href="#eye"/></svg><svg class="ti-main"><use href="#comp"/></svg>Cnc_Week 9_Coffee table v6</div>
        </div>
        <div class="tree-row lv1 d-flex align-items-center">
          <span class="tw-slot"></span>
          <div class="tree-pill no-eye d-flex align-items-center"><svg class="ti-main"><use href="#units"/></svg>Units: mm</div>
        </div>
        <div class="tree-row lv1 d-flex align-items-center">
          <span class="tw-slot"><svg width="14" height="16"><use href="#tri-right"/></svg></span>
          <div class="tree-pill no-eye d-flex align-items-center"><svg class="ti-main"><use href="#folder"/></svg>Named Views</div>
        </div>
        <div class="tree-row lv1 d-flex align-items-center">
          <span class="tw-slot"><svg width="14" height="14"><use href="#tri-down"/></svg></span>
          <div class="tree-pill d-flex align-items-center"><svg class="ti-eye"><use href="#eye"/></svg><svg class="ti-main"><use href="#comp"/></svg>Models</div>
        </div>
        <div class="tree-row lv2 d-flex align-items-center">
          <span class="tw-slot"><svg width="14" height="14"><use href="#tri-down"/></svg></span>
          <div class="tree-pill p-tight d-flex align-items-center"><svg class="ti-eye"><use href="#eye"/></svg><svg class="ti-main"><use href="#comp"/></svg><span class="active-doc">Cnc_Week 9_Coffee ta...</span><svg class="radio-mark"><use href="#radio"/></svg></div>
        </div>
        <div class="tree-row lv3 d-flex align-items-center">
          <span class="tw-slot"><svg width="14" height="16"><use href="#tri-right"/></svg></span>
          <div class="tree-pill no-eye d-flex align-items-center"><svg class="ti-main"><use href="#folder"/></svg>Named Views</div>
        </div>
        <div class="tree-row lv3 d-flex align-items-center">
          <span class="tw-slot"><svg width="14" height="16"><use href="#tri-right"/></svg></span>
          <div class="tree-pill d-flex align-items-center"><svg class="ti-eye"><use href="#eye-off"/></svg><svg class="ti-main"><use href="#folder"/></svg>Origin</div>
        </div>
        <div class="tree-row lv3 d-flex align-items-center">
          <span class="tw-slot"><svg width="14" height="16"><use href="#tri-right"/></svg></span>
          <div class="tree-pill d-flex align-items-center"><svg class="ti-eye"><use href="#eye"/></svg><svg class="ti-main"><use href="#folder"/></svg>Sketches</div>
        </div>
        <div class="tree-row lv3 d-flex align-items-center">
          <span class="tw-slot"><svg width="14" height="16"><use href="#tri-right"/></svg></span>
          <div class="tree-pill d-flex align-items-center"><svg class="ti-eye"><use href="#eye"/></svg><svg class="ti-main"><use href="#body"/></svg>top:1</div>
        </div>
        <div class="tree-row lv3 d-flex align-items-center">
          <span class="tw-slot"><svg width="14" height="16"><use href="#tri-right"/></svg></span>
          <div class="tree-pill d-flex align-items-center"><svg class="ti-eye"><use href="#eye"/></svg><svg class="ti-main"><use href="#body"/></svg>leg:1</div>
        </div>
        <div class="tree-row lv3 d-flex align-items-center">
          <span class="tw-slot"><svg width="14" height="16"><use href="#tri-right"/></svg></span>
          <div class="tree-pill d-flex align-items-center"><svg class="ti-eye"><use href="#eye"/></svg><svg class="ti-main"><use href="#body"/></svg>leg:2</div>
        </div>
        <div class="tree-row lv3 d-flex align-items-center">
          <span class="tw-slot"><svg width="14" height="16"><use href="#tri-right"/></svg></span>
          <div class="tree-pill d-flex align-items-center"><svg class="ti-eye"><use href="#eye"/></svg><svg class="ti-main"><use href="#body"/></svg>connector:1</div>
        </div>
        <div class="tree-row lv3 d-flex align-items-center">
          <span class="tw-slot"><svg width="14" height="16"><use href="#tri-right"/></svg></span>
          <div class="tree-pill d-flex align-items-center"><svg class="ti-eye"><use href="#eye-off"/></svg><svg class="ti-main"><use href="#body"/></svg>plywood:1</div>
        </div>
        <div class="tree-row lv1 d-flex align-items-center">
          <span class="tw-slot"><svg width="14" height="14"><use href="#tri-down"/></svg></span>
          <div class="tree-pill d-flex align-items-center"><svg class="ti-eye"><use href="#eye"/></svg><span class="dash-line d-flex align-items-center"><svg class="ti-main"><use href="#setup-ico"/></svg>Setups&nbsp;&nbsp;</span></div>
        </div>
        <div class="tree-row lv2 d-flex align-items-center">
          <span class="tw-slot"><svg width="14" height="14"><use href="#tri-down"/></svg></span>
          <div class="tree-pill p-tight d-flex align-items-center"><svg class="ti-eye"><use href="#eye"/></svg><svg class="ti-check"><use href="#check"/></svg><svg class="ti-op ti-wide"><use href="#setup-ico"/></svg><span class="setup-tag">Setup1</span><svg class="radio-mark"><use href="#radio"/></svg></div>
        </div>
        <div class="tree-row lv3 d-flex align-items-center">
          <span class="tw-slot"><svg width="14" height="16"><use href="#tri-right"/></svg></span>
          <div class="tree-pill d-flex align-items-center"><svg class="ti-eye"><use href="#eye-off"/></svg><svg class="ti-check"><use href="#check"/></svg>
            <svg class="ti-op" viewBox="0 0 22 22"><path d="M11 1L21 8V14L11 21L1 14V8Z" fill="#f2f2f2" stroke="#5b7d9b" stroke-width="1.300"/><path d="M11 7L19 12L11 19L3 12Z" fill="#4e9edc"/><path d="M6 12Q11 8 16 12Q11 15 6 12Z" fill="none" stroke="#123f6b" stroke-width="1.500"/></svg>[T1] 2D Adaptive1</div>
        </div>
        <div class="tree-row lv3 d-flex align-items-center">
          <span class="tw-slot"><svg width="14" height="16"><use href="#tri-right"/></svg></span>
          <div class="tree-pill d-flex align-items-center"><svg class="ti-eye"><use href="#eye-off"/></svg><svg class="ti-check"><use href="#check"/></svg>
            <svg class="ti-op" viewBox="0 0 22 22"><path d="M11 7L21 13L11 21L1 13Z" fill="#fff" stroke="#5aa5de" stroke-width="1.500"/><path d="M11 1L18 9L11 17L4 9Z" fill="#6fb0e6"/><path d="M11 1L18 9L11 12L4 9Z" fill="#f7f7f7" stroke="#5aa5de"/></svg>[T1] 2D Contour1</div>
        </div>
        <div class="tree-row lv3 d-flex align-items-center">
          <span class="tw-slot"><svg width="14" height="16"><use href="#tri-right"/></svg></span>
          <div class="tree-pill p-tight d-flex align-items-center"><svg class="ti-eye"><use href="#eye-off"/></svg><svg class="ti-check"><use href="#check"/></svg>
            <div class="sel-op d-flex align-items-center"><svg viewBox="0 0 14 14"><path d="M7 6L14 10L7 14L0 10Z" fill="#bfe3f6"/><path d="M7 0L13 6L7 10L1 6Z" fill="#fff"/></svg>[T1] 2D Contour2</div></div>
        </div>
      </div>
    </div>

    <!-- bottom view toolbar -->
    <div class="view-tools d-flex align-items-center">
      <div class="vt-item vw-42"><svg viewBox="0 0 24 24"><path d="M12 1V23M1 12Q12 6 23 12Q12 18 1 12Z" fill="none" stroke="#444" stroke-width="1.500"/><path d="M3 17L8 14V20Z" fill="#222"/></svg><span class="caret-mark"></span></div>
      <div class="vt-item vw-32"><svg viewBox="0 0 24 24"><rect x="3" y="7" width="18" height="15" fill="#f3f3f3" stroke="#555" stroke-width="1.300"/><rect x="6" y="11" width="12" height="6" fill="#aaa" stroke="#555"/><path d="M4 6L10 1M13 4L18 1" stroke="#555"/></svg></div>
      <div class="vt-item vw-31"><svg viewBox="0 0 24 24"><path d="M7 22Q2 15 2 13Q3 11 6 14V5Q8 3 9 5V12V3Q11 1 12 3V12V4Q14 2 15 4V12V6Q17 4 18 6V15Q18 19 15 22Z" fill="#fff" stroke="#555" stroke-width="1.200"/></svg></div>
      <div class="vt-item vw-35"><svg viewBox="0 0 24 24"><circle cx="10" cy="12" r="6.500" fill="#fff" stroke="#666" stroke-width="1.500"/><path d="M15 17L21 23" stroke="#555" stroke-width="2"/><path d="M19 2V9M16 5.500H22M16 11H22" stroke="#555"/></svg></div>
      <div class="vt-item vw-41"><svg viewBox="0 0 24 24"><circle cx="10" cy="10" r="8.500" fill="#fff" stroke="#666" stroke-width="1.500"/><rect x="6" y="6" width="8" height="8" fill="#fff" stroke="#555"/><path d="M16 16L23 23" stroke="#444" stroke-width="3"/></svg><span class="caret-mark"></span></div>
      <div class="vt-item vw-38"><svg viewBox="0 0 24 24"><rect x="2" y="2" width="20" height="15" fill="#9cc3e4" stroke="#555" stroke-width="1.500"/><path d="M12 17V21M6 22H18" stroke="#555" stroke-width="2"/></svg><span class="caret-mark"></span></div>
      <div class="vt-item vw-39"><svg viewBox="0 0 24 24"><rect x="1" y="2" width="21" height="20" fill="#fff" stroke="#555"/><path d="M5 2V22M9 2V22M13 2V22M17 2V22M1 6H22M1 10H22M1 14H22M1 18H22" stroke="#555"/></svg><span class="caret-mark"></span></div>
      <div class="vt-item vw-40"><svg viewBox="0 0 24 24"><path d="M2 7L8 2H22V17L17 22H2Z" fill="#eee" stroke="#555" stroke-width="1.300"/><path d="M2 7H17V22M17 7L22 2" fill="none" stroke="#555"/><circle cx="9" cy="14" r="3" fill="#9cc3e4" stroke="#555"/></svg><span class="caret-mark"></span></div>
      <div class="vt-item vw-40"><svg viewBox="0 0 24 24"><rect x="2" y="5" width="20" height="4" rx="2" fill="#3f7fb8" stroke="#333"/><rect x="2" y="11" width="20" height="4" rx="2" fill="#3f7fb8" stroke="#333"/><rect x="2" y="17" width="20" height="4" rx="2" fill="#3f7fb8" stroke="#333"/></svg><span class="caret-mark"></span></div>
      <div class="vt-item vw-38"><svg viewBox="0 0 24 24"><path d="M4 10Q7 3 15 4L21 7" fill="none" stroke="#4e9edc" stroke-width="2"/><path d="M20 14Q17 21 9 20L3 17" fill="none" stroke="#444" stroke-width="2"/><path d="M22 3V9H16ZM2 21V15H8Z" fill="#4e9edc"/></svg><span class="caret-mark"></span></div>
      <div class="vt-item vw-39"><svg viewBox="0 0 24 24"><path d="M12 2L23 12L12 22L1 12Z" fill="#4e9edc"/><path d="M12 2L19 9L12 14L5 9Z" fill="#8cc2ec"/></svg><span class="caret-mark"></span></div>
      <div class="vt-item vw-34"><svg viewBox="0 0 24 24"><rect x="1" y="6" width="22" height="14" fill="#d0d3d6" stroke="#555"/><rect x="7" y="9" width="8" height="6" fill="#8cb8dc"/></svg><span class="caret-mark"></span></div>
      <div class="vt-item vw-41"><svg viewBox="0 0 24 24"><rect x="5" y="2" width="14" height="7" fill="#bbb"/><rect x="9" y="9" width="6" height="13" fill="#aaa"/></svg><span class="caret-mark"></span></div>
      <div class="vt-item vw-39"><svg viewBox="0 0 24 24"><path d="M1 4H15Q23 4 23 12Q23 20 15 20H1V15H15Q18 15 18 12Q18 9 15 9H1Z" fill="#5fa8e2"/></svg><span class="caret-mark"></span></div>
    </div>
    <div class="status-text">2D Contour2 | Machining time: 0:11:18</div>
  </div>

  <!-- windows taskbar -->
  <div class="task-bar d-flex">
    <div class="start-btn d-flex align-items-center justify-content-center"><svg width="20" height="20" viewBox="0 0 20 20" fill="#fff"><path d="M0 3L8.500 1.700V9.500H0ZM9.500 1.500L20 0V9.500H9.500ZM0 10.500H8.500V18.300L0 17ZM9.500 10.500H20V20L9.500 18.500Z"/></svg></div>
    <div class="search-box d-flex align-items-center">
      <svg class="search-art" viewBox="0 0 100 48">
        <path d="M0 48Q22 8 70 5Q88 4 100 5V48Z" fill="#6f9a42"/><path d="M8 48Q30 14 100 10V48Z" fill="#9dbe63"/>
        <path d="M6 20Q6 14 13 14Q17 6 25 9Q32 9 32 16Q32 21 27 21H10Q6 21 6 20Z" fill="#a9cbe4"/>
        <path d="M42 27Q48 24 52 27Q58 23 68 27L69 38L66 40V48H62V41H50V48H46V40L44 37Z" fill="#eee9d8"/>
        <path d="M40 24L47 24L47 33L43 35Z" fill="#cfc9b4"/>
        <path d="M72 30Q77 27 81 30V34H72Z" fill="#e8e8d8"/>
      </svg>
      <svg width="20" height="24" viewBox="0 0 20 24"><circle cx="12" cy="8" r="6.500" fill="none" stroke="#222" stroke-width="1.300"/><path d="M7.500 13L1 22" stroke="#222" stroke-width="1.300"/></svg>
      <span>Type here to search</span>
    </div>
    <div class="task-apps d-flex">
      <div class="task-app"><svg viewBox="0 0 32 36"><path d="M3 6L22 3L29 8V31L8 33L3 27Z" fill="#fff" stroke="#111" stroke-width="1.500"/><text x="16" y="28" text-anchor="middle" font-size="21" font-weight="700" fill="#111" font-family="Liberation Serif">N</text></svg></div>
      <div class="task-app open"><svg viewBox="0 0 32 36"><path d="M3 4H13L15 7H29V18H3Z" fill="#e8b422"/><rect x="3" y="12" width="26" height="21" fill="#f8d65a"/><rect x="11" y="20" width="10" height="13" fill="#2d9fd8"/><rect x="13" y="25" width="6" height="8" fill="#f8d65a"/></svg></div>
      <div class="task-app open"><svg viewBox="0 0 32 36"><circle cx="16" cy="20" r="13" fill="#e8481f"/><path d="M20 1Q30 12 29 22Q26 14 20 13Z" fill="#f9a825"/><circle cx="15" cy="20" r="7" fill="#5d3bc4"/><path d="M8 14Q13 8 19 11L14 15Z" fill="#f36b21"/></svg></div>
      <div class="task-app"><svg viewBox="0 0 32 36"><circle cx="13" cy="13" r="11" fill="#e9e6e6" stroke="#c9474f" stroke-width="2"/><path d="M11 6L22 26" stroke="#999" stroke-width="2"/><path d="M22 14L12 26" stroke="#2a86c9" stroke-width="2"/><circle cx="10" cy="30" r="4" fill="none" stroke="#2a86c9" stroke-width="2"/><circle cx="24" cy="30" r="4" fill="none" stroke="#2a86c9" stroke-width="2"/></svg></div>
      <div class="task-app open front"><svg viewBox="0 0 32 36"><rect x="2" y="1" width="28" height="34" rx="3" fill="#ee7b22"/><path d="M12 6H21V9H16V13H21V16H16V22H12Z" fill="#fff"/><rect x="5" y="26" width="22" height="8" rx="2" fill="#7d3d10"/><text x="16" y="32.500" text-anchor="middle" font-size="6" font-weight="700" fill="#f5c9a0" font-family="Liberation Sans">360</text></svg></div>
      <div class="task-app open"><svg viewBox="0 0 32 36"><circle cx="16" cy="18" r="15" fill="#1ed760"/><path d="M7 13Q16 10 25 15M8 18Q16 16 24 20M9.500 23Q16 21 22 24.500" fill="none" stroke="#111" stroke-width="2.500" stroke-linecap="round"/></svg></div>
    </div>
    <div class="tray d-flex align-items-center">
      <div class="tray-ico"><svg viewBox="0 0 22 20"><path d="M3 14L11 6L19 14" fill="none" stroke="#eef0f2" stroke-width="1.300"/></svg></div>
      <div class="tray-ico"><svg viewBox="0 0 22 20"><rect x="3" y="5" width="11" height="10" rx="2" fill="none" stroke="#eee"/><path d="M14 8L19 5V15L14 12Z" fill="none" stroke="#eee"/><path d="M5 2Q8 0 12 2M5 18Q8 20 12 18" stroke="#eee" fill="none"/></svg></div>
      <div class="tray-ico"><svg viewBox="0 0 22 20"><path d="M4 16Q0 16 0 12Q1 8 5 9Q7 3 13 5Q16 6 17 9Q22 10 22 13Q22 16 18 16Z" fill="#1e88e5"/></svg></div>
      <div class="tray-ico"><svg viewBox="0 0 22 20"><path d="M4 16Q0 16 0 12Q1 8 5 9Q7 3 13 5Q16 6 17 9Q22 10 22 13Q22 16 18 16Z" fill="#e9e9e9"/><path d="M5 9Q7 3 13 5Q16 6 17 9Z" fill="#999"/></svg></div>
      <div class="tray-ico"><svg viewBox="0 0 22 20"><path d="M1 4L20 1V15L1 18Z" fill="none" stroke="#eee"/><path d="M7 9Q9 6 13 8M13 10Q10 13 7 11" fill="none" stroke="#eee"/><circle cx="17" cy="16" r="4" fill="#2a78d4"/></svg></div>
      <div class="tray-ico"><svg viewBox="0 0 22 20"><rect x="2" y="2" width="19" height="13" fill="none" stroke="#eee"/><rect x="0" y="1" width="5" height="5" fill="none" stroke="#eee"/><path d="M11 15V18M7 18.500H15" stroke="#eee"/></svg></div>
      <div class="tray-ico"><svg viewBox="0 0 22 20"><rect x="6" y="5" width="14" height="10" fill="#eee" stroke="#eee"/><path d="M0 10H6M1 6V9M4 6V9" stroke="#eee"/><rect x="20.500" y="8" width="1.500" height="4" fill="#eee"/></svg></div>
      <div class="tray-ico"><svg viewBox="0 0 22 20"><path d="M1 7H5L10 3V17L5 13H1Z" fill="none" stroke="#eee"/><path d="M13 7Q15 10 13 13M16 4Q20 10 16 16M19 2Q24 10 19 18" fill="none" stroke="#999"/></svg></div>
      <div class="lang-box">ENG<br>TRQ</div>
      <div class="clock-box">19:11<br>12-Mar-23</div>
      <div class="notify-box"><svg viewBox="0 0 34 34"><path d="M0 2H20V16H15L11 20V16H0Z" fill="#fff"/><path d="M4 6H16M4 9H16M4 12H12" stroke="#444"/><circle cx="19" cy="20" r="10" fill="#1b2530" stroke="#666" stroke-width="1.300"/><text x="19" y="25" text-anchor="middle" font-size="13" font-weight="700" fill="#eee" font-family="Open Sans">3</text></svg></div>
    </div>
  </div>
</div>
</body>
</html>
